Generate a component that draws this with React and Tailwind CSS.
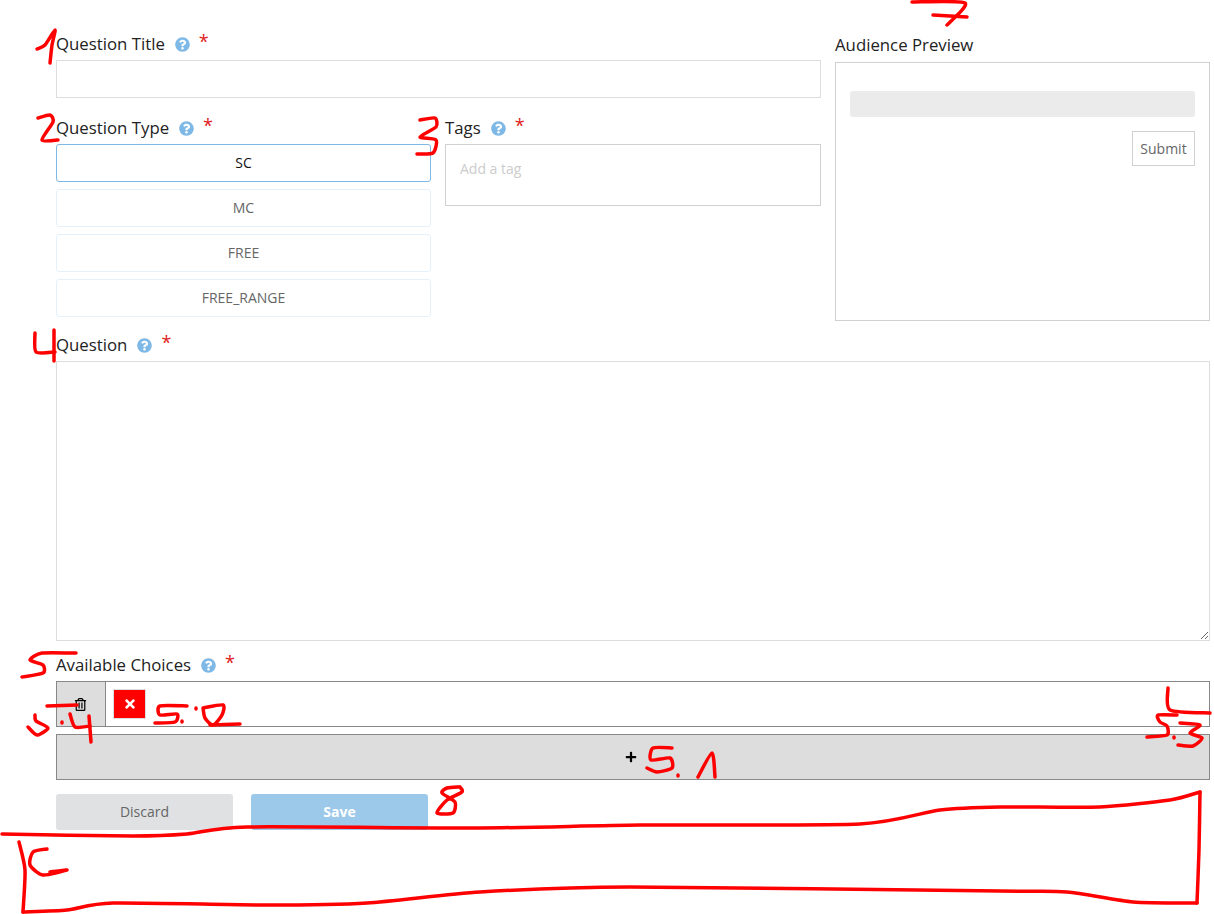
import React from 'react';
import { FaQuestionCircle, FaTimes, FaPlus, FaRegTrashAlt } from 'react-icons/fa';

// Marcas rojas dibujadas a mano sobre la captura
const TRAZOS = [
  // 1
  [[37, 49], [45, 45], [55, 30], [52, 45], [50, 63]],
  // 2
  [[38, 118], [50, 115], [53, 122], [42, 140], [58, 140]],
  // 3
  [[420, 120], [435, 118], [436, 127], [420, 137], [436, 140], [433, 153], [417, 154]],
  // 4
  [[35, 333], [36, 352], [55, 352]],
  [[54, 330], [54, 361]],
  // 5
  [[76, 653], [42, 653], [30, 660], [43, 665], [43, 673], [22, 677]],
  // 5.4
  [[47, 706], [77, 705]],
  [[35, 715], [36, 721], [48, 728], [37, 735], [28, 727]],
  [[62, 722], [62, 723]],
  [[70, 714], [75, 727], [90, 726]],
  [[89, 716], [91, 742]],
  // 5.0
  [[187, 706], [160, 706], [160, 715], [177, 714], [175, 722], [155, 723]],
  [[182, 721], [182, 722]],
  [[196, 708], [196, 709]],
  [[203, 708], [223, 705], [222, 715], [213, 725], [205, 718], [203, 708]],
  [[210, 725], [240, 724]],
  // 5.1
  [[672, 748], [653, 748], [651, 760], [670, 758], [672, 768], [657, 772], [647, 768]],
  [[678, 775], [678, 776]],
  [[698, 777], [712, 753], [715, 777]],
  // 5.3
  [[1168, 688], [1170, 710], [1210, 713]],
  [[1177, 715], [1158, 715], [1160, 722], [1167, 726], [1167, 735], [1147, 737]],
  [[1174, 737], [1174, 738]],
  [[1180, 723], [1200, 725], [1190, 733], [1202, 738], [1193, 746], [1178, 745]],
  // 7
  [[912, 2], [965, 3], [947, 25]],
  [[933, 15], [967, 17]],
  // 8
  [[460, 787], [462, 792], [447, 800], [437, 813], [453, 813], [455, 802], [442, 793], [447, 788], [460, 787]],
  // 6 (recuadro)
  [[2, 834], [133, 836], [187, 834], [247, 827], [480, 828], [640, 825], [860, 824], [940, 810], [1000, 807], [1100, 807], [1170, 800], [1200, 792]],
  [[1200, 792], [1199, 850], [1197, 903]],
  [[1197, 903], [1133, 902], [1067, 892], [1000, 891], [630, 887], [480, 892], [367, 903], [267, 905], [113, 903], [67, 910], [23, 912]],
  [[23, 912], [25, 870], [19, 842]],
  // 6
  [[47, 849], [33, 852], [30, 865], [43, 875], [67, 870], [50, 872]]
];

// Curva que pasa por todos los puntos, casi sin redondear las esquinas
const trazoAPath = (puntos) => {
  const t = 0.12;
  let d = `M${puntos[0][0]} ${puntos[0][1]}`;
  for (let i = 0; i < puntos.length - 1; i++) {
    const p0 = puntos[Math.max(i - 1, 0)];
    const p1 = puntos[i];
    const p2 = puntos[i + 1];
    const p3 = puntos[Math.min(i + 2, puntos.length - 1)];
    d += ` C${p1[0] + (p2[0] - p0[0]) * t} ${p1[1] + (p2[1] - p0[1]) * t} ${p2[0] - (p3[0] - p1[0]) * t} ${p2[1] - (p3[1] - p1[1]) * t} ${p2[0]} ${p2[1]}`;
  }
  return d;
};

const TIPOS = ['SC', 'MC', 'FREE', 'FREE_RANGE'];

const Etiqueta = ({ texto }) => (
  <div className="flex items-center h-6 mb-1 text-[16.8px] text-[#222]">
    <span>{texto}</span>
    <FaQuestionCircle className="ml-[10px] text-[15px] text-[#7db8e6]" />
    <span className="ml-[9px] -mt-[6px] text-[18px] leading-none text-[#e02020]">*</span>
  </div>
);

const App = () => {
  return (
    <div className="relative min-h-[914px] bg-white pl-[56px] pr-[4px] pt-[32px] font-['Open_Sans',sans-serif]">
      <div className="flex gap-[14px]">
        <div className="w-[765px]">
          <Etiqueta texto="Question Title" />
          <input type="text" className="block w-full h-[38px] border border-[#ddd] bg-white outline-none" />

          <div className="flex gap-[14px] mt-[18px]">
            <div className="w-[375px]">
              <Etiqueta texto="Question Type" />
              <div className="flex flex-col gap-[7px]">
                {TIPOS.map((tipo, i) => (
                  <button
                    key={tipo}
                    className={`h-[38px] pb-[2px] rounded-[3px] bg-white text-[14px] border ${i === 0 ? 'border-[#7db8e6] text-[#111]' : 'border-[#e4f1fb] text-[#666]'}`}
                  >
                    {tipo}
                  </button>
                ))}
              </div>
            </div>
            <div className="w-[376px]">
              <Etiqueta texto="Tags" />
              <div className="h-[62px] border border-[#d0d0d0] px-[14px] pt-[11px]">
                <input type="text" placeholder="Add a tag" className="w-full text-[14px] outline-none placeholder:text-[#ccc]" />
              </div>
            </div>
          </div>
        </div>

        <div className="w-[375px] pt-px">
          <div className="flex items-center h-6 mb-[5px] text-[16.8px] text-[#222]">Audience Preview</div>
          <div className="h-[259px] border border-[#d0d0d0] px-[14px] pt-[28px]">
            <div className="h-[26px] rounded-[3px] bg-[#ebebeb]" />
            <div className="flex justify-end mt-[14px]">
              <button className="w-[63px] h-[35px] border border-[#d0d0d0] bg-white text-[14px] text-[#666]">Submit</button>
            </div>
          </div>
        </div>
      </div>

      <div className="mt-[12px]">
        <Etiqueta texto="Question" />
        <textarea className="block w-full h-[280px] border border-[#ddd] bg-white outline-none" />
      </div>

      <div className="mt-[12px]">
        <Etiqueta texto="Available Choices" />
        <div className="flex h-[46px] border border-[#888]">
          <button className="flex items-center justify-center w-[49px] pr-[2px] bg-[#ddd] border-r border-[#888] text-[13px] text-black">
            <FaRegTrashAlt />
          </button>
          <div className="pl-[7px] pt-[7px]">
            <button className="flex items-center justify-center w-[33px] h-[30px] bg-[#f00] border border-[#ddd] text-[14px] text-white">
              <FaTimes />
            </button>
          </div>
        </div>
        <button className="flex items-center justify-center w-full h-[46px] mt-[7px] pr-[4px] bg-[#ddd] border border-[#888] text-[12px] text-black">
          <FaPlus />
        </button>
      </div>

      <div className="flex gap-[18px] mt-[14px]">
        <button className="w-[177px] h-[36px] pb-[2px] rounded-[3px] bg-[#e0e1e3] text-[14px] text-[#666]">Discard</button>
        <button className="w-[177px] h-[36px] pb-[2px] rounded-[3px] bg-[#9cc8ea] text-[14px] font-bold text-white">Save</button>
      </div>

      <svg className="absolute top-0 left-0 pointer-events-none" width="1214" height="914" viewBox="0 0 1214 914" fill="none">
        {TRAZOS.map((puntos, i) => (
          <path key={i} d={trazoAPath(puntos)} stroke="#ff0000" strokeWidth="3.5" strokeLinecap="round" strokeLinejoin="round" />
        ))}
      </svg>
    </div>
  );
};

export default App;
